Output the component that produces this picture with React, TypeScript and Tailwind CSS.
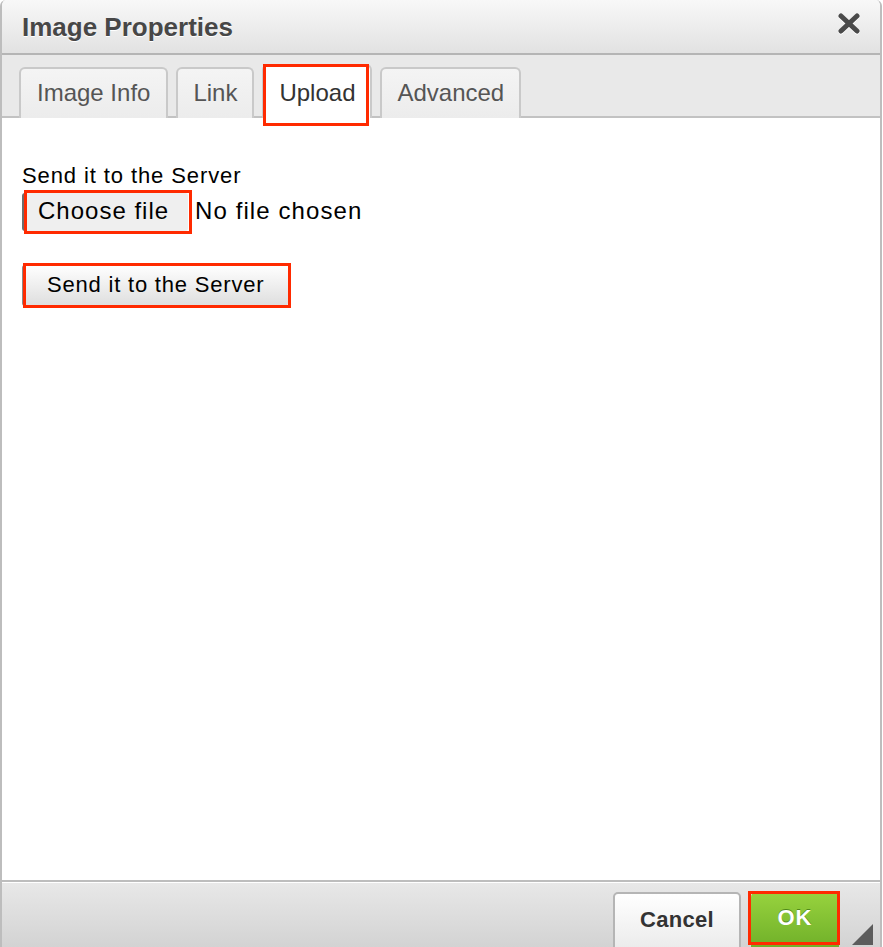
import React from "react";

const RedBox = ({ className }: { className: string }) => (
  <div className={`pointer-events-none absolute border-[3px] border-[#ff2a00] ${className}`} />
);

export default function App() {
  return (
    <div
      className="w-[883px] h-[947px] bg-white overflow-hidden"
      style={{ fontFamily: '"Liberation Sans", Arial, Helvetica, sans-serif' }}
    >
      <div className="w-[882px] h-[947px] flex flex-col border-l-2 border-r-2 border-[#bdbdbd] rounded-t-[6px] overflow-hidden">
        {/* Title bar */}
        <div className="h-[55px] shrink-0 flex items-center justify-between pl-[20px] pr-[20px] border-b-2 border-[#b5b5b5] bg-gradient-to-b from-[#f8f8f8] to-[#e2e2e2]">
          <div className="text-[26px] font-bold text-[#474747] [text-shadow:0_1px_0_#ffffff] leading-none mt-[1px]">
            Image Properties
          </div>
          <svg width="24" height="22" viewBox="0 0 24 22" className="mt-[-6px] mr-[-1px]">
            <g stroke="#ffffff" strokeWidth="5" strokeLinecap="round" transform="translate(0,1)">
              <line x1="4" y1="3" x2="20" y2="18" />
              <line x1="20" y1="3" x2="4" y2="18" />
            </g>
            <g stroke="#4a4a4a" strokeWidth="5" strokeLinecap="round">
              <line x1="4" y1="3" x2="20" y2="18" />
              <line x1="20" y1="3" x2="4" y2="18" />
            </g>
          </svg>
        </div>

        {/* Tab bar */}
        <div className="h-[63px] shrink-0 relative flex items-end gap-[8px] pl-[17px] bg-[#e9e9e9] border-b-2 border-[#c2c2c2]">
          <div className="h-[51px] mb-[-2px] px-[16px] flex items-center rounded-t-[6px] border-2 border-b-0 border-[#c9c9c9] bg-gradient-to-b from-[#f4f4f4] to-[#ececec] text-[24px] text-[#555555] pb-[2px]">
            Image Info
          </div>
          <div className="h-[51px] mb-[-2px] px-[15px] flex items-center rounded-t-[6px] border-2 border-b-0 border-[#c9c9c9] bg-gradient-to-b from-[#f4f4f4] to-[#ececec] text-[24px] text-[#555555] pb-[2px]">
            Link
          </div>
          <div className="relative h-[54px] mb-[-2px] w-[110px] pl-[15px] flex items-center rounded-t-[6px] border-2 border-b-0 border-[#c9c9c9] bg-white text-[24px] text-[#333333] pt-[1px]">
            Upload
          </div>
          <div className="h-[51px] mb-[-2px] px-[15px] flex items-center rounded-t-[6px] border-2 border-b-0 border-[#c9c9c9] bg-gradient-to-b from-[#f4f4f4] to-[#ececec] text-[24px] text-[#555555] pb-[2px]">
            Advanced
          </div>
          <RedBox className="left-[261px] top-[9px] w-[106px] h-[62px] z-10" />
        </div>

        {/* Content */}
        <div className="flex-1 bg-white pl-[20px] pt-[45px] relative">
          <div className="text-[22px] leading-[26px] text-black tracking-[0.9px]">Send it to the Server</div>
          <div className="relative mt-[1px] flex items-center h-[44px]">
            <div className="h-[38px] w-[166px] flex items-center pl-[14px] pb-[2px] bg-[#efefef] border-l-2 border-[#6d6d6d] rounded-[3px] text-[24px] text-black tracking-[1px]">
              Choose file
            </div>
            <div className="ml-[7px] pb-[2px] text-[24px] text-black tracking-[1.1px]">No file chosen</div>
            <RedBox className="left-[2px] top-0 w-[168px] h-[44px]" />
          </div>
          <div className="relative mt-[29px] w-[268px] h-[45px] flex items-center">
            <div className="h-[41px] w-[266px] flex items-center pl-[23px] pb-[2px] bg-gradient-to-b from-[#ffffff] to-[#dedede] border-l-2 border-[#8a8a8a] rounded-[3px] text-[22px] text-black tracking-[0.8px]">
              Send it to the Server
            </div>
            <RedBox className="left-[1px] top-0 w-[268px] h-[45px]" />
          </div>
        </div>

        {/* Footer */}
        <div className="h-[67px] shrink-0 relative border-t-2 border-[#bdbdbd] bg-gradient-to-b from-[#e8e8e8] to-[#d3d3d3]">
          <div className="h-[1px] bg-white" />
          <div className="absolute left-[611px] top-[10px] w-[128px] h-[64px] rounded-[5px] border-2 border-[#b5b5b5] bg-gradient-to-b from-[#ffffff] to-[#e9e9e9] flex justify-center pt-[9px] text-[22px] font-bold text-[#333333] tracking-[0.3px]">
            Cancel
          </div>
          <div className="absolute left-[749px] top-[10px] w-[88px] h-[64px] rounded-[5px] bg-gradient-to-b from-[#98d33e] to-[#6aab26] flex justify-center pt-[9px] text-[22px] font-bold text-white tracking-[1px] [text-shadow:0_-1px_0_#4f8a1a]">
            OK
          </div>
          <RedBox className="left-[746px] top-[9px] w-[92px] h-[54px]" />
          <svg width="22" height="22" viewBox="0 0 22 22" className="absolute left-[850px] top-[42px]">
            <polygon points="21,0 21,21 0,21" fill="#5c5c5c" />
          </svg>
        </div>
      </div>
    </div>
  );
}
